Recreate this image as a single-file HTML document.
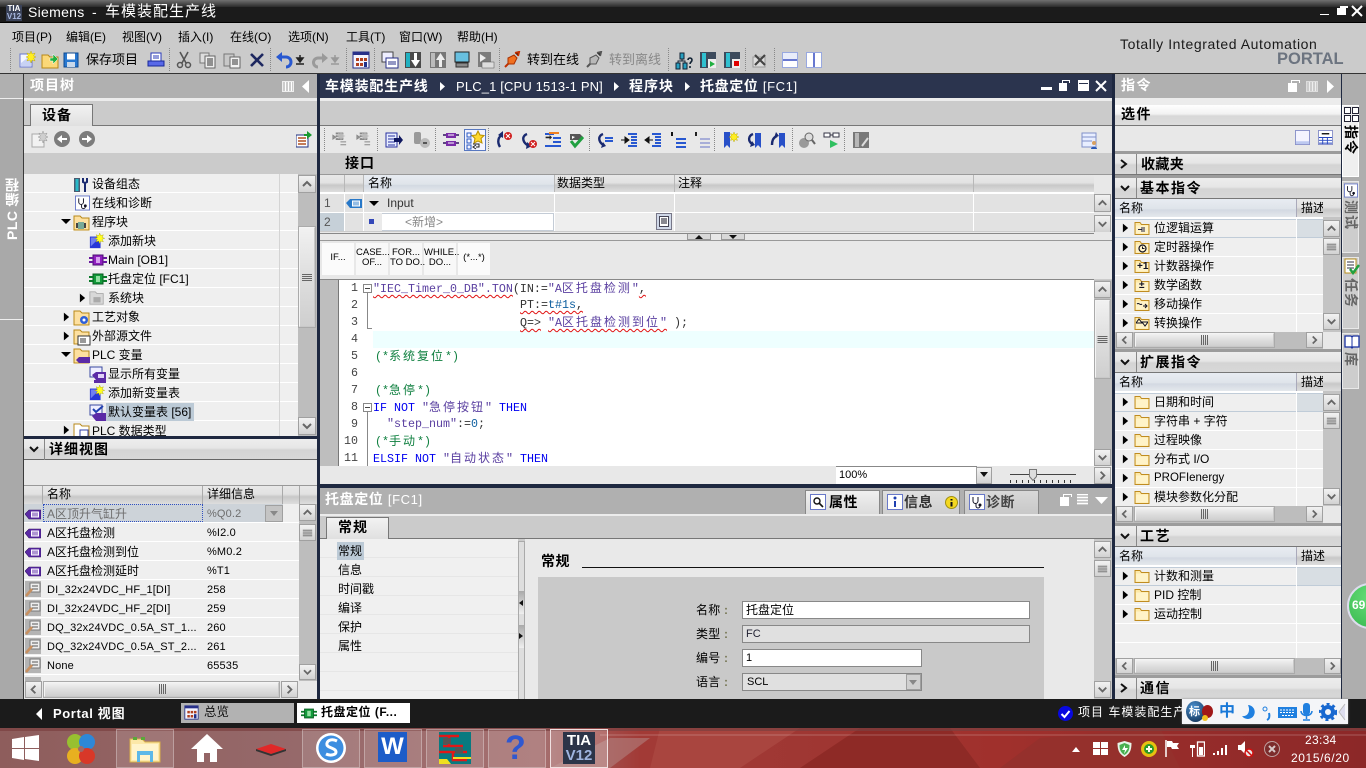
<!DOCTYPE html>
<html lang="zh-CN"><head><meta charset="utf-8"><title>Siemens - 车模装配生产线</title>
<style>
*{box-sizing:border-box}
html,body{margin:0;padding:0;width:1366px;height:768px;overflow:hidden;background:#cbcbcb}
body{position:relative;font:12px/14px "Liberation Sans","WenQuanYi Zen Hei","Noto Sans CJK SC",sans-serif;color:#000}
.a,.t,.i{position:absolute}
.t{white-space:nowrap}
.b{font-weight:bold;font-size:14px;line-height:18px;letter-spacing:1px}
.w{color:#fff}
.sb{background:linear-gradient(#f2f2f2,#d2d2d2);border:1px solid #fff;outline:1px solid #a0a0a0;outline-offset:-1px}
.th{background:linear-gradient(#f1f1f1,#dedede 50%,#cfcfcf);border:2px solid #fff;border-color:#f4f4f4 #c8c8c8 #c8c8c8 #f4f4f4;outline:1px solid #aaa;outline-offset:-1px}
.band{background:linear-gradient(#ededed,#e6e6e6 45%,#d4d4d4 55%,#d8d8d8);border-bottom:1px solid #777}
.hd{background:linear-gradient(#e8ecf2,#dfe4ea 55%,#d3d9e2 60%,#e4e8ec)}
.hg{background:linear-gradient(#e8e8e8,#e2e2e2 45%,#c8c8c8 60%,#dedede)}
.rows{background:repeating-linear-gradient(#efefef 0,#efefef 18px,#fff 18px,#fff 19px)}
.sep{position:absolute;width:0;border-left:1px dotted #888}
.l{font-size:11px;letter-spacing:.15px}
pre{margin:0}
.c{position:absolute;font:11.67px/14px "Liberation Mono",monospace;white-space:pre;color:#333}
.c span{white-space:pre}
.z{font-family:"WenQuanYi Zen Hei","Noto Sans CJK SC",sans-serif;font-size:12px;letter-spacing:2px}
.k{color:#0000f0}.g{color:#108040}.s{color:#5a3fa0}
.u{text-decoration:underline wavy #e01010 1px;text-underline-offset:2px}
.n{position:absolute;width:20px;text-align:right;left:338px;font:11.67px/14px "Liberation Mono",monospace;color:#444}
</style></head><body>
<svg width="0" height="0" style="position:absolute"><defs>
<symbol id="fold" viewBox="0 0 16 16"><path d="M1 2.500h5l1.500 2H15v10H1z" fill="#fde9a8" stroke="#c08c20"/><path d="M2 5.500h12v8H2z" fill="#fff3c8"/></symbol>
<symbol id="cu" viewBox="0 0 16 16"><path d="M4 10l4-4 4 4" fill="none" stroke="#666" stroke-width="2"/></symbol>
<symbol id="cd" viewBox="0 0 16 16"><path d="M4 6l4 4 4-4" fill="none" stroke="#666" stroke-width="2"/></symbol>
<symbol id="cl" viewBox="0 0 16 16"><path d="M10 4l-4 4 4 4" fill="none" stroke="#666" stroke-width="2"/></symbol>
<symbol id="cr" viewBox="0 0 16 16"><path d="M6 4l4 4-4 4" fill="none" stroke="#666" stroke-width="2"/></symbol>
<symbol id="gh" viewBox="0 0 16 16"><path d="M3 5.500h10M3 7.500h10M3 9.500h10M3 11.500h10" stroke="#666"/></symbol>
<symbol id="gv" viewBox="0 0 16 16"><path d="M5.500 3v10M7.500 3v10M9.500 3v10M11.500 3v10" stroke="#666"/></symbol>
<symbol id="tr" viewBox="0 0 8 10"><path d="M1 0l6 5-6 5z" fill="#000"/></symbol>
<symbol id="td" viewBox="0 0 10 8"><path d="M0 1h10L5 6z" fill="#000"/></symbol>
<symbol id="tag" viewBox="0 0 16 12"><path d="M0 6l4-4h12v9H4z" fill="#5b2aa6" stroke="#301060" stroke-width=".6"/><rect x="6" y="3.500" width="8" height="6" fill="#fff"/><path d="M8 4.500v4M10 4.500v4M12 4.500v4" stroke="#5b2aa6"/></symbol>
<symbol id="ptag" viewBox="0 0 16 16"><rect width="16" height="16" fill="#b4b4b4"/><path d="M5 2h10v9H5z" fill="#eee" stroke="#777"/><path d="M7 5h6M7 8h6" stroke="#555"/><path d="M1 15l6-7" stroke="#c89060" stroke-width="2.500"/></symbol>
<symbol id="pb" viewBox="0 0 18 12"><rect x="4" y="1" width="10" height="10" fill="#9020c0" stroke="#4a1070"/><path d="M0 3h4v2H0zM0 7h4v2H0zM14 3h4v2h-4zM14 7h4v2h-4z" fill="#6a18a0"/><rect x="7" y="3" width="4" height="6" fill="#d8a0f0"/></symbol>
<symbol id="gb" viewBox="0 0 18 12"><rect x="4" y="1" width="10" height="10" fill="#129a3a" stroke="#0a5a20"/><path d="M0 3h4v2H0zM0 7h4v2H0zM14 3h4v2h-4zM14 7h4v2h-4z" fill="#0a7a2a"/><rect x="7" y="3" width="4" height="6" fill="#90e0a0"/></symbol>
<symbol id="doc" viewBox="0 0 18 18"><path d="M2 3h12v13H2z" fill="#f4f6ff" stroke="#6878d0"/><path d="M3 12l10-8v11H3z" fill="#c8d2f4"/><path d="M13 0l1.100 3 3-1-1.500 3 2.400 1-2.400 1 1.500 3-3-1-1.100 3-1.100-3-3 1 1.500-3-2.400-1 2.400-1-1.500-3 3 1z" fill="#ffee20" stroke="#b8a000" stroke-width=".4"/></symbol>
<symbol id="docg" viewBox="0 0 18 18"><path d="M2 3h12v13H2z" fill="#f2f2f2" stroke="#aaa"/><path d="M13 0l1.100 3 3-1-1.500 3 2.400 1-2.400 1 1.500 3-3-1-1.100 3-1.100-3-3 1 1.500-3-2.400-1 2.400-1-1.500-3 3 1z" fill="#cfcfcf" stroke="#888" stroke-width=".4"/></symbol>
<symbol id="open" viewBox="0 0 18 18"><path d="M1 4h6l2 2h8v11H1z" fill="#fbd878" stroke="#b88818"/><path d="M9 7h3V3l5 5-5 5v-3H9z" fill="#20b040" stroke="#fff" stroke-width=".5"/></symbol>
<symbol id="save" viewBox="0 0 16 16"><path d="M1 1h14v14H1z" fill="#2878d0" stroke="#0c4890"/><rect x="4" y="1.500" width="8" height="6" fill="#fff"/><rect x="4" y="10" width="8" height="5" fill="#c8d8ea"/></symbol>
<symbol id="print" viewBox="0 0 18 18"><path d="M4 2h10v8H4z" fill="#fff" stroke="#2838b8"/><path d="M6 5h6M6 7h6" stroke="#2838b8"/><path d="M1 10h16v5H1z" fill="#5868e8" stroke="#182898"/></symbol>
<symbol id="cut" viewBox="0 0 18 18"><path d="M5 1l6 11M13 1L7 12" stroke="#555" stroke-width="1.600"/><circle cx="5" cy="14" r="2.500" fill="none" stroke="#555" stroke-width="1.500"/><circle cx="13" cy="14" r="2.500" fill="none" stroke="#555" stroke-width="1.500"/></symbol>
<symbol id="copy" viewBox="0 0 18 18"><path d="M1 2h9v10H1z" fill="#ddd" stroke="#777"/><path d="M6 5h10v12H6z" fill="#eee" stroke="#666"/><path d="M8 8h6M8 10h6M8 12h6M8 14h6" stroke="#333"/></symbol>
<symbol id="paste" viewBox="0 0 18 18"><path d="M1 3h10v12H1z" fill="#c8c8c8" stroke="#777"/><path d="M7 6h10v11H7z" fill="#f2f2f2" stroke="#666"/><path d="M9 9h6M9 11h6M9 13h6" stroke="#333"/></symbol>
<symbol id="x" viewBox="0 0 18 18"><path d="M3 3l12 12M15 3L3 15" stroke="#1e2860" stroke-width="2.600"/></symbol>
<symbol id="undo" viewBox="0 0 18 18"><path d="M3 6h8a4.500 4.500 0 010 10" fill="none" stroke="#2858d0" stroke-width="3"/><path d="M7 1L1 6l6 5z" fill="#2858d0"/></symbol>
<symbol id="redo" viewBox="0 0 18 18"><path d="M15 7H7a4.500 4.500 0 000 9" fill="none" stroke="#9a9a9a" stroke-width="3"/><path d="M11 2l6 5-6 5z" fill="#9a9a9a"/></symbol>
<symbol id="dl" viewBox="0 0 10 12"><path d="M5 1v5M2 4l3 4 3-4zM1 10h8" stroke="#222" fill="#222" stroke-width="1.500"/></symbol>
<symbol id="dlg" viewBox="0 0 10 12"><path d="M5 1v5M2 4l3 4 3-4zM1 10h8" stroke="#999" fill="#999" stroke-width="1.500"/></symbol>
<symbol id="grid" viewBox="0 0 18 18"><rect x="1" y="1" width="16" height="16" fill="#f4f4ff" stroke="#28308a"/><rect x="1" y="1" width="16" height="3" fill="#28308a"/><path d="M4 7h3v3H4zM8 7h3v3H8zM12 7h3v3h-3zM4 12h3v3H4zM8 12h3v3H8z" fill="#b04020"/><path d="M12 11h3v5h-3z" fill="#20308a"/></symbol>
<symbol id="mon" viewBox="0 0 18 18"><rect x="2" y="1" width="14" height="10" fill="#68c0e0" stroke="#222"/><rect x="3" y="12" width="12" height="4" fill="#8a8a8a" stroke="#333"/></symbol>
<symbol id="cc" viewBox="0 0 18 18"><path d="M1 1h11v10H1z" fill="#eef" stroke="#444"/><path d="M5 7h12v10H5z" fill="#fff" stroke="#28308a"/><path d="M8 10v4M10 10v4M12 10v4M14 10v4" stroke="#28308a"/></symbol>
<symbol id="dn" viewBox="0 0 18 18"><rect x="1" y="1" width="16" height="16" fill="#4a4a4a"/><rect x="2" y="2" width="4" height="14" fill="#20b0c0"/><path d="M10 2h3v7h3l-4.500 7L7 9h3z" fill="#fff"/></symbol>
<symbol id="upg" viewBox="0 0 18 18"><rect x="1" y="1" width="16" height="16" fill="#777"/><rect x="2" y="2" width="4" height="14" fill="#bbb"/><path d="M10 16h3V9h3L11.500 2 7 9h3z" fill="#eee"/></symbol>
<symbol id="rt" viewBox="0 0 18 18"><rect x="1" y="1" width="13" height="15" fill="#7c7c7c"/><path d="M3 3l6 4-6 4z" fill="#eee"/><rect x="5" y="11" width="12" height="6" fill="#ddd" stroke="#555" stroke-width=".5"/></symbol>
<symbol id="plug" viewBox="0 0 18 18"><path d="M2 16l4-4M12 2l4-1-1 4" stroke="#c03000" stroke-width="2"/><path d="M5 7l6-3 3 3-3 6-6 0z" fill="#f07020" stroke="#a83000"/></symbol>
<symbol id="plugg" viewBox="0 0 18 18"><path d="M2 16l4-4M12 2l4-1-1 4" stroke="#555" stroke-width="2"/><path d="M5 7l6-3 3 3-3 6-6 0z" fill="#b8b8b8" stroke="#555"/></symbol>
<symbol id="net" viewBox="0 0 18 18"><rect x="5" y="1" width="4" height="6" fill="#28a0c0" stroke="#123"/><rect x="1" y="11" width="4" height="6" fill="#28a0c0" stroke="#123"/><rect x="8" y="11" width="4" height="6" fill="#28a0c0" stroke="#123"/><path d="M7 7v2H3v2M7 9h3v2" fill="none" stroke="#123"/><path d="M13 8a2 2 0 114 0c0 2-2 2-2 4M15 14v2" fill="none" stroke="#123" stroke-width="1.600"/></symbol>
<symbol id="run" viewBox="0 0 18 18"><rect x="1" y="1" width="16" height="16" fill="#3c4a5c"/><rect x="3" y="2" width="4" height="14" fill="#30c0d0"/><rect x="9" y="8" width="8" height="9" fill="#eee"/><path d="M11 10l5 3-5 3z" fill="#20b040"/></symbol>
<symbol id="stp" viewBox="0 0 18 18"><rect x="1" y="1" width="16" height="16" fill="#3c4a5c"/><rect x="3" y="2" width="4" height="14" fill="#30c0d0"/><rect x="9" y="8" width="8" height="9" fill="#eee"/><rect x="11" y="10" width="5" height="5" fill="#e00000"/></symbol>
<symbol id="xw" viewBox="0 0 18 18"><path d="M2 6h12v10H2z" fill="#ddd" stroke="#999"/><path d="M4 4l10 10M14 4L4 14" stroke="#444" stroke-width="2.200"/></symbol>
<symbol id="h2" viewBox="0 0 16 16"><rect x=".5" y=".5" width="15" height="15" fill="#fff" stroke="#98a8e0"/><rect x="1" y="1" width="14" height="6" fill="#e8ecfa"/><path d="M1 8h14" stroke="#6878d0" stroke-width="2"/></symbol>
<symbol id="v2" viewBox="0 0 16 16"><rect x=".5" y=".5" width="15" height="15" fill="#fff" stroke="#98a8e0"/><path d="M8 1v14" stroke="#6878d0" stroke-width="2"/></symbol>
<symbol id="lst" viewBox="0 0 18 18"><path d="M5 2h8M5 5h8M5 8h8" stroke="#888" stroke-width="2"/><path d="M2 4l3 2-3 2zM10 11h6M10 14h6" stroke="#888" fill="#999"/><path d="M12 0l1 3 3-1-1 3 3 1-3 1 1 3-3-1-1 3-1-3-3 1 1-3-3-1 3-1-1-3 3 1z" fill="#bbb" transform="translate(1 0) scale(.8)"/></symbol>
<symbol id="dest" viewBox="0 0 18 18"><path d="M1 2h11v14H1z" fill="#e8eeff" stroke="#2830a0"/><path d="M3 5h7M3 8h7M3 11h7M3 14h7" stroke="#2830a0"/><path d="M9 7h5V4l4 5-4 5v-3H9z" fill="#101860"/></symbol>
<symbol id="cyl" viewBox="0 0 18 18"><rect x="1" y="1" width="7" height="12" rx="2" fill="#9a9a9a"/><circle cx="12" cy="12" r="5" fill="#bbb"/><path d="M10 12h4" stroke="#555" stroke-width="2"/></symbol>
<symbol id="ch" viewBox="0 0 18 18"><rect x="4" y="2" width="10" height="5" fill="#7a2ca8"/><rect x="4" y="10" width="10" height="5" fill="#7a2ca8"/><path d="M1 4h3M14 4h3M1 12h3M14 12h3" stroke="#301060" stroke-width="1.500"/><path d="M6 4h6M6 12h6" stroke="#fff"/></symbol>
<symbol id="star" viewBox="0 0 20 20"><path d="M2 3h4v4H2zM2 9h4v4H2zM2 15h4v4H2z" fill="none" stroke="#2858c0"/><path d="M13 1l2 4 4 .500-3 3 1 4.500-4-2-4 2 1-4.500-3-3 4-.500z" fill="#ffd830" stroke="#b89000"/><path d="M8 14h6v3h-3M11 19l-3-2 3-2" fill="none" stroke="#222"/></symbol>
<symbol id="rx" viewBox="0 0 18 18"><path d="M8 4C3 5 2 11 5 16" fill="none" stroke="#1a2a70" stroke-width="2.400"/><path d="M8 0L3 4l5 3z" fill="#1a2a70"/><circle cx="13" cy="5" r="4" fill="#d02020"/><path d="M11 3l4 4M15 3l-4 4" stroke="#fff"/></symbol>
<symbol id="lx" viewBox="0 0 18 18"><path d="M7 3C2 5 2 10 7 14" fill="none" stroke="#1a2a70" stroke-width="2.400"/><path d="M6 18l6-3-5-4z" fill="#1a2a70"/><circle cx="13" cy="13" r="4" fill="#d02020"/><path d="M11 11l4 4M15 11l-4 4" stroke="#fff"/></symbol>
<symbol id="ind" viewBox="0 0 18 18"><path d="M1 3h9M9 7h8M9 11h8M1 15h16" stroke="#2858d0" stroke-width="2"/><path d="M5 1h10v2H5z" fill="#f08020"/><path d="M2 7h5v-2l3 3-3 3V9H2z" fill="#222" transform="scale(.8)"/></symbol>
<symbol id="chk" viewBox="0 0 18 18"><path d="M2 3h10l3 3-3 3H2z" fill="#555"/><path d="M4 5l3 1-3 2z" fill="#fff"/><path d="M3 10l4 5 8-9" fill="none" stroke="#20a040" stroke-width="3"/></symbol>
<symbol id="lar" viewBox="0 0 18 18"><path d="M7 3C2 5 2 10 7 14" fill="none" stroke="#1a2a70" stroke-width="2.400"/><path d="M5 17l5-2-3-4z" fill="#1a2a70"/><path d="M9 7h8M9 10h8" stroke="#2858d0" stroke-width="2"/></symbol>
<symbol id="ina" viewBox="0 0 18 18"><path d="M8 3h9M11 6h6M11 9h6M11 12h6M8 15h9" stroke="#2858d0" stroke-width="2"/><path d="M1 9h6M5 6l4 3-4 3z" stroke="#111" fill="#111"/></symbol>
<symbol id="ola" viewBox="0 0 18 18"><path d="M8 3h9M11 6h6M11 9h6M11 12h6M8 15h9" stroke="#2858d0" stroke-width="2"/><path d="M9 9H3M5 6L1 9l4 3z" stroke="#111" fill="#111"/></symbol>
<symbol id="cmt" viewBox="0 0 18 18"><path d="M2 1h2v4H2z" fill="#111"/><path d="M7 8h10M7 12h10M7 16h10" stroke="#2858d0" stroke-width="2"/></symbol>
<symbol id="cmg" viewBox="0 0 18 18"><path d="M2 1h2v4H2z" fill="#222"/><path d="M7 8h10M7 12h10M7 16h10" stroke="#a8aed8" stroke-width="2"/></symbol>
<symbol id="bm" viewBox="0 0 18 18"><path d="M2 1h6v16l-3-3-3 3z" fill="#2850c8"/><path d="M12 1l1 2.500 2.500-1-1 2.500 2.500 1-2.500 1 1 2.500-2.500-1-1 2.500-1-2.500-2.500 1 1-2.500-2.500-1 2.500-1-1-2.500 2.500 1z" fill="#ffee20" stroke="#b0a000" stroke-width=".4"/></symbol>
<symbol id="bl" viewBox="0 0 18 18"><path d="M10 2h6v15l-3-3-3 3z" fill="#2850c8"/><path d="M8 3C3 5 3 10 7 13" fill="none" stroke="#1a2a70" stroke-width="2.400"/><path d="M5 16l5-2-3-4z" fill="#1a2a70"/></symbol>
<symbol id="br" viewBox="0 0 18 18"><path d="M10 2h6v15l-3-3-3 3z" fill="#2850c8"/><path d="M3 14c0-5 2-8 5-9" fill="none" stroke="#1a2a70" stroke-width="2.400"/><path d="M7 1l3 4-5 2z" fill="#1a2a70"/></symbol>
<symbol id="srch" viewBox="0 0 18 18"><circle cx="6" cy="12" r="5" fill="#999"/><circle cx="11" cy="6" r="4" fill="#ddd" stroke="#666"/><path d="M14 9l3 4" stroke="#666" stroke-width="2"/></symbol>
<symbol id="gl" viewBox="0 0 18 18"><rect x="1" y="2" width="6" height="4" fill="#fff" stroke="#334"/><rect x="10" y="2" width="6" height="4" fill="#fff" stroke="#334"/><path d="M7 4h3" stroke="#334"/><path d="M7 9l8 4-8 4z" fill="#30c060"/></symbol>
<symbol id="bz" viewBox="0 0 18 18"><rect x="1" y="1" width="16" height="16" fill="#787878"/><rect x="3" y="2" width="4" height="14" fill="#b8b8b8"/><path d="M10 15l6-8" stroke="#ddd" stroke-width="2"/></symbol>
<symbol id="usr" viewBox="0 0 18 18"><rect x="1" y="1" width="14" height="14" fill="#e8eeff" stroke="#8090c8"/><path d="M1 5h14M1 9h10" stroke="#8090c8"/><circle cx="13" cy="11" r="2" fill="#d8a060"/><path d="M10 17c0-3 6-3 6 0z" fill="#2858b8"/></symbol>
<symbol id="t1" viewBox="0 0 16 16"><rect x=".5" y=".5" width="15" height="15" fill="#f4f4ff" stroke="#8890c8"/><rect x="1" y="12" width="14" height="3" fill="#bcc8f0"/></symbol>
<symbol id="t2" viewBox="0 0 16 16"><rect x=".5" y=".5" width="15" height="15" fill="#fff" stroke="#8890c8"/><path d="M1 8h14M1 11h14M1 14h14M5 8v7M10 8v7" stroke="#2848c0"/><path d="M4 4h8" stroke="#111" stroke-width="1.500"/></symbol>
<symbol id="steth" viewBox="0 0 16 16"><rect x=".5" y=".5" width="15" height="15" fill="#fff" stroke="#6878c8"/><path d="M4 3v4a2.500 2.500 0 005 0V3M7 10v2a2 2 0 004 0" fill="none" stroke="#112"/><circle cx="11" cy="11" r="1.500" fill="#112"/></symbol>
<symbol id="tool" viewBox="0 0 18 18"><rect x="1" y="2" width="6" height="14" fill="#4a5a70"/><rect x="2.500" y="3" width="3" height="12" fill="#28b8c8"/><path d="M10 2v4l2 1 2-1V2M12 7v9" fill="none" stroke="#1a2a70" stroke-width="2"/></symbol>
<symbol id="pfold" viewBox="0 0 18 18"><path d="M1 2h6l2 2h7v12H1z" fill="#fde0a0" stroke="#b88818"/><rect x="3" y="9" width="10" height="5" fill="#444"/><rect x="5" y="8" width="6" height="7" fill="#78aa98"/></symbol>
<symbol id="gfold" viewBox="0 0 18 18"><path d="M1 2h6l2 2h7v12H1z" fill="#d8d8d8" stroke="#aaa"/><rect x="5" y="8" width="8" height="6" fill="#aaa"/></symbol>
<symbol id="tfold" viewBox="0 0 18 18"><path d="M1 2h6l2 2h7v12H1z" fill="#fde0a0" stroke="#b88818"/><circle cx="11" cy="11" r="4" fill="#3060d8"/><circle cx="11" cy="11" r="1.500" fill="#fff"/></symbol>
<symbol id="xfold" viewBox="0 0 18 18"><path d="M1 2h6l2 2h7v12H1z" fill="#fde0a0" stroke="#b88818"/><rect x="5" y="8" width="12" height="9" fill="#fff" stroke="#333"/><path d="M8 10v5M10 10v5M12 10v5" stroke="#333"/></symbol>
<symbol id="vfold" viewBox="0 0 18 18"><path d="M1 2h6l2 2h7v12H1z" fill="#fde0a0" stroke="#b88818"/><path d="M3 13l3-3h11v6H6z" fill="#5b2aa6"/></symbol>
<symbol id="dfold" viewBox="0 0 18 18"><path d="M1 2h6l2 2h7v12H1z" fill="#fff" stroke="#b88818"/><rect x="7" y="8" width="8" height="8" fill="#fff" stroke="#3040a8"/></symbol>
<symbol id="vall" viewBox="0 0 18 18"><rect x="1" y="1" width="12" height="10" fill="#eef" stroke="#3848a0"/><path d="M3 9l4-3h10v8H7z" fill="#5b2aa6"/><rect x="9" y="8" width="6" height="4" fill="#e0d0f8"/><rect x="5" y="14" width="12" height="3" fill="#5b2aa6"/></symbol>
<symbol id="vdef" viewBox="0 0 18 18"><rect x="1" y="1" width="12" height="10" fill="#eef" stroke="#3848a0"/><path d="M4 5l3 3 7-6" fill="none" stroke="#2040b0" stroke-width="2"/><path d="M3 12l4-3h10v8H7z" fill="#5b2aa6"/></symbol>
<symbol id="nw" viewBox="0 0 18 18"><rect x="1" y="4" width="12" height="13" fill="#2838d8"/><path d="M2 5h10L2 15z" fill="#7080f0"/><path d="M12 0l1.200 3 3-1-1.500 3 3 1-3 1 1.500 3-3-1-1.200 3-1-3-3 1 1.500-3-3-1 3-1-1.500-3 3 1z" fill="#ffff20" stroke="#a09800" stroke-width=".4"/></symbol>
</defs></svg>

<!-- title bar -->
<div class="a" style="left:0;top:0;width:1366px;height:7px;background:linear-gradient(#707070,#2a2a2a)"></div>
<div class="a" style="left:0;top:7px;width:1366px;height:16px;background:#1b1b1b"></div>
<div class="a" style="left:0;top:22px;width:1366px;height:1px;background:#000"></div>
<div class="a" style="left:6px;top:5px;width:16px;height:16px;background:#3a4258"></div>
<div class="t w" style="left:6px;top:5px;font-size:8px;line-height:8px;width:16px;text-align:center;font-weight:bold">TIA<br><span style="color:#a8b8e0">V12</span></div>
<div class="t w" style="left:28px;top:4px;font-size:14px;line-height:17px;letter-spacing:.3px">Siemens</div>
<div class="t w" style="left:92px;top:4px;font-size:14px;line-height:17px">-</div>
<div class="t w" style="left:105px;top:3px;font-size:15px;line-height:18px;letter-spacing:1px">车模装配生产线</div>
<div class="a" style="left:1320px;top:14px;width:9px;height:1px;background:#fff"></div>
<div class="a" style="left:1337px;top:8px;width:9px;height:7px;background:#fff"></div>
<div class="a" style="left:1340px;top:6px;width:8px;height:2px;background:#fff"></div>
<svg class="i" style="left:1351px;top:5px" width="12" height="12"><path d="M1 1l10 10M11 1L1 11" stroke="#fff" stroke-width="2"/></svg>

<!-- menu -->
<div class="a" style="left:0;top:23px;width:1366px;height:50px;background:#cbcbcb"></div>
<div class="a" style="left:0;top:73px;width:1366px;height:1px;background:#333"></div>
<div class="t" style="left:12px;top:30px">项目(P)</div>
<div class="t" style="left:66px;top:30px">编辑(E)</div>
<div class="t" style="left:122px;top:30px">视图(V)</div>
<div class="t" style="left:178px;top:30px">插入(I)</div>
<div class="t" style="left:230px;top:30px">在线(O)</div>
<div class="t" style="left:288px;top:30px">选项(N)</div>
<div class="t" style="left:346px;top:30px">工具(T)</div>
<div class="t" style="left:399px;top:30px">窗口(W)</div>
<div class="t" style="left:457px;top:30px">帮助(H)</div>
<div class="t" style="left:1120px;top:37px;font-size:14px;line-height:15px;letter-spacing:.58px;color:#1a1a1a">Totally Integrated Automation</div>
<div class="t" style="left:1277px;top:49px;font-size:16.500px;line-height:20px;font-weight:bold;color:#6c7480">PORTAL</div>

<!-- main toolbar -->
<div class="sep" style="left:10px;top:48px;height:23px"></div><div class="sep" style="left:169px;top:48px;height:23px"></div><div class="sep" style="left:270px;top:48px;height:23px"></div><div class="sep" style="left:346px;top:48px;height:23px"></div><div class="sep" style="left:374px;top:48px;height:23px"></div><div class="sep" style="left:499px;top:48px;height:23px"></div><div class="sep" style="left:668px;top:48px;height:23px"></div><div class="sep" style="left:745px;top:48px;height:23px"></div><div class="sep" style="left:774px;top:48px;height:23px"></div>
<svg class="i" style="left:18px;top:51px" width="18" height="18"><use href="#doc"/></svg>
<svg class="i" style="left:41px;top:51px" width="18" height="18"><use href="#open"/></svg>
<svg class="i" style="left:63px;top:52px" width="16" height="16"><use href="#save"/></svg>
<div class="t" style="left:86px;top:52px;font-size:13px;line-height:15px">保存项目</div>
<svg class="i" style="left:147px;top:51px" width="18" height="18"><use href="#print"/></svg>
<svg class="i" style="left:175px;top:51px" width="18" height="18"><use href="#cut"/></svg>
<svg class="i" style="left:199px;top:51px" width="18" height="18"><use href="#copy"/></svg>
<svg class="i" style="left:223px;top:51px" width="18" height="18"><use href="#paste"/></svg>
<svg class="i" style="left:248px;top:51px" width="18" height="18"><use href="#x"/></svg>
<svg class="i" style="left:275px;top:51px" width="18" height="18"><use href="#undo"/></svg>
<svg class="i" style="left:295px;top:54px" width="10" height="12"><use href="#dl"/></svg>
<svg class="i" style="left:311px;top:51px" width="18" height="18"><use href="#redo"/></svg>
<svg class="i" style="left:330px;top:54px" width="10" height="12"><use href="#dlg"/></svg>
<svg class="i" style="left:352px;top:51px" width="18" height="18"><use href="#grid"/></svg>
<svg class="i" style="left:381px;top:51px" width="18" height="18"><use href="#cc"/></svg>
<svg class="i" style="left:404px;top:51px" width="18" height="18"><use href="#dn"/></svg>
<svg class="i" style="left:429px;top:51px" width="18" height="18"><use href="#upg"/></svg>
<svg class="i" style="left:453px;top:51px" width="18" height="18"><use href="#mon"/></svg>
<svg class="i" style="left:477px;top:51px" width="18" height="18"><use href="#rt"/></svg>
<svg class="i" style="left:503px;top:51px" width="18" height="18"><use href="#plug"/></svg>
<div class="t" style="left:527px;top:52px;font-size:13px;line-height:15px">转到在线</div>
<svg class="i" style="left:585px;top:51px" width="18" height="18"><use href="#plugg"/></svg>
<div class="t" style="left:609px;top:52px;font-size:13px;line-height:15px;color:#888">转到离线</div>
<svg class="i" style="left:675px;top:52px" width="18" height="18"><use href="#net"/></svg>
<svg class="i" style="left:699px;top:51px" width="18" height="18"><use href="#run"/></svg>
<svg class="i" style="left:723px;top:51px" width="18" height="18"><use href="#stp"/></svg>
<svg class="i" style="left:751px;top:51px" width="18" height="18"><use href="#xw"/></svg>
<svg class="i" style="left:782px;top:52px" width="16" height="16"><use href="#h2"/></svg>
<svg class="i" style="left:806px;top:52px" width="16" height="16"><use href="#v2"/></svg>

<!-- left strip -->
<div class="a" style="left:0;top:74px;width:24px;height:626px;background:#a9a9a9"></div>
<div class="a" style="left:0;top:74px;width:24px;height:24px;background:#b0b0b0"></div>
<div class="a" style="left:0;top:98px;width:23px;height:1px;background:#eee"></div>
<div class="a" style="left:0;top:319px;width:23px;height:1px;background:#eee"></div>
<div class="a" style="left:23px;top:74px;width:1px;height:626px;background:#3a3a3a"></div>
<div class="t w" style="left:3px;top:180px;font-size:14px;line-height:18px;font-weight:bold;writing-mode:vertical-rl;transform:rotate(180deg);height:60px;letter-spacing:.5px">PLC 编程</div>

<!-- project tree -->
<div class="a" style="left:24px;top:74px;width:293px;height:24px;background:#b0b0b0"></div>
<div class="t b w" style="left:30px;top:76px">项目树</div>
<svg class="i" style="left:282px;top:81px" width="12" height="11"><rect x=".5" y=".5" width="11" height="10" fill="#ccc" stroke="#eee"/><path d="M3.500 1v9M6.500 1v9M9.500 1v9" stroke="#fff"/></svg>
<svg class="i" style="left:302px;top:80px" width="8" height="13"><path d="M7 0L0 6.500 7 13z" fill="#fff"/></svg>
<div class="a" style="left:24px;top:98px;width:293px;height:3px;background:#ececec"></div>
<div class="a" style="left:24px;top:101px;width:293px;height:24px;background:#cbcbcb"></div>
<div class="a" style="left:24px;top:125px;width:293px;height:1px;background:#777"></div>
<div class="a" style="left:30px;top:104px;width:63px;height:22px;background:linear-gradient(#f2f2f2,#e0e0e0);border:1px solid #777;border-bottom:0"></div>
<div class="t b" style="left:42px;top:106px">设备</div>
<div class="a" style="left:24px;top:126px;width:293px;height:27px;background:#e8e8e8"></div>
<svg class="i" style="left:30px;top:131px" width="18" height="18"><use href="#docg"/></svg>
<svg class="i" style="left:54px;top:131px" width="16" height="16"><circle cx="8" cy="8" r="8" fill="#7c7c7c"/><path d="M3 8l5-4v3h5v2H8v3z" fill="#fff"/></svg>
<svg class="i" style="left:79px;top:131px" width="16" height="16"><circle cx="8" cy="8" r="8" fill="#7c7c7c"/><path d="M13 8L8 4v3H3v2h5v3z" fill="#fff"/></svg>
<svg class="i" style="left:296px;top:131px" width="16" height="17"><rect x="0" y="4" width="12" height="12" fill="#fff" stroke="#203080"/><path d="M2 7h8M2 10h8M2 13h8" stroke="#b05020" stroke-width="1.500"/><path d="M8 3h3V0l5 4-5 4V5H8z" fill="#1a9a30"/></svg>
<div class="a" style="left:24px;top:153px;width:293px;height:21px;background:#cbcbcb"></div>
<div class="a rows" style="left:24px;top:174px;width:275px;height:262px;overflow:hidden"></div>
<div class="a" style="left:279px;top:174px;width:1px;height:262px;background:#d4d4d4"></div>
<svg class="i" style="left:73px;top:176px" width="18" height="18"><use href="#tool"/></svg>
<div class="t" style="left:92px;top:177px">设备组态</div>
<svg class="i" style="left:75px;top:195px" width="15" height="16"><use href="#steth"/></svg>
<div class="t" style="left:92px;top:196px">在线和诊断</div>
<svg class="i" style="left:61px;top:218px" width="10" height="8"><use href="#td"/></svg>
<svg class="i" style="left:73px;top:214px" width="18" height="18"><use href="#pfold"/></svg>
<div class="t" style="left:92px;top:215px">程序块</div>
<svg class="i" style="left:89px;top:233px" width="16" height="16"><use href="#nw"/></svg>
<div class="t" style="left:108px;top:234px">添加新块</div>
<svg class="i" style="left:89px;top:254px" width="18" height="12"><use href="#pb"/></svg>
<div class="t" style="left:108px;top:253px">Main [OB1]</div>
<svg class="i" style="left:89px;top:273px" width="18" height="12"><use href="#gb"/></svg>
<div class="t" style="left:108px;top:272px">托盘定位 [FC1]</div>
<svg class="i" style="left:79px;top:293px" width="7" height="10"><use href="#tr"/></svg>
<svg class="i" style="left:89px;top:290px" width="16" height="16"><use href="#gfold"/></svg>
<div class="t" style="left:108px;top:291px">系统块</div>
<svg class="i" style="left:63px;top:312px" width="7" height="10"><use href="#tr"/></svg>
<svg class="i" style="left:73px;top:309px" width="18" height="18"><use href="#tfold"/></svg>
<div class="t" style="left:92px;top:310px">工艺对象</div>
<svg class="i" style="left:63px;top:331px" width="7" height="10"><use href="#tr"/></svg>
<svg class="i" style="left:73px;top:328px" width="18" height="18"><use href="#xfold"/></svg>
<div class="t" style="left:92px;top:329px">外部源文件</div>
<svg class="i" style="left:61px;top:351px" width="10" height="8"><use href="#td"/></svg>
<svg class="i" style="left:73px;top:347px" width="18" height="18"><use href="#vfold"/></svg>
<div class="t" style="left:92px;top:348px">PLC 变量</div>
<svg class="i" style="left:89px;top:366px" width="18" height="18"><use href="#vall"/></svg>
<div class="t" style="left:108px;top:367px">显示所有变量</div>
<svg class="i" style="left:89px;top:385px" width="16" height="16"><use href="#nw"/></svg>
<div class="t" style="left:108px;top:386px">添加新变量表</div>
<div class="a" style="left:106px;top:403px;width:88px;height:18px;background:#bccad6"></div>
<svg class="i" style="left:89px;top:404px" width="18" height="18"><use href="#vdef"/></svg>
<div class="t" style="left:108px;top:405px">默认变量表 [56]</div>
<div class="a" style="left:24px;top:422px;width:275px;height:14px;overflow:hidden">
<div class="t" style="left:68px;top:2px">PLC 数据类型</div>
<svg class="i" style="left:49px;top:0" width="18" height="18"><use href="#dfold"/></svg>
<svg class="i" style="left:39px;top:3px" width="7" height="10"><use href="#tr"/></svg></div>
<div class="a" style="left:298px;top:174px;width:19px;height:262px;background:#bdbdbd"></div>
<svg class="i sb" style="left:298px;top:175px" width="18" height="18"><use href="#cu"/></svg>
<div class="a th" style="left:298px;top:226px;width:18px;height:102px"></div>
<svg class="i" style="left:298px;top:269px" width="18" height="16"><use href="#gh"/></svg>
<svg class="i sb" style="left:298px;top:417px" width="18" height="18"><use href="#cd"/></svg>

<!-- dividers -->
<div class="a" style="left:317px;top:74px;width:3px;height:626px;background:#1e2840"></div>
<div class="a" style="left:24px;top:436px;width:293px;height:3px;background:#1e2840"></div>
<div class="a" style="left:1112px;top:74px;width:3px;height:626px;background:#1e2840"></div>
<div class="a" style="left:1341px;top:74px;width:1px;height:626px;background:#1e2840"></div>

<!-- detail view -->
<div class="a band" style="left:24px;top:439px;width:293px;height:21px;border-bottom:1px solid #666"></div>
<svg class="i" style="left:28px;top:443px" width="12" height="12"><path d="M2 4l4 4 4-4" fill="none" stroke="#111" stroke-width="2"/></svg>
<div class="a" style="left:44px;top:439px;width:1px;height:21px;background:#888"></div>
<div class="t b" style="left:49px;top:440px">详细视图</div>
<div class="a" style="left:24px;top:460px;width:293px;height:25px;background:#e8e8e8"></div>
<div class="a" style="left:24px;top:485px;width:293px;height:1px;background:#999"></div>
<div class="a hg" style="left:24px;top:486px;width:293px;height:18px"></div>
<div class="a" style="left:42px;top:486px;width:1px;height:18px;background:#aaa"></div>
<div class="a" style="left:202px;top:486px;width:1px;height:18px;background:#aaa"></div>
<div class="a" style="left:282px;top:486px;width:1px;height:18px;background:#aaa"></div>
<div class="a" style="left:299px;top:486px;width:1px;height:18px;background:#aaa"></div>
<div class="t" style="left:47px;top:487px">名称</div><div class="t" style="left:207px;top:487px">详细信息</div>
<div class="a rows" style="left:24px;top:504px;width:275px;height:178px"></div>
<div class="a" style="left:24px;top:504px;width:259px;height:18px;background:#cdd3d9"></div>
<div class="a" style="left:43px;top:504px;width:160px;height:18px;border:1px dotted #3050c0"></div>
<svg class="i" style="left:25px;top:508px" width="16" height="12"><use href="#tag"/></svg>
<div class="t" style="left:47px;top:507px;color:#6e6e6e">A区顶升气缸升</div><div class="t l" style="left:207px;top:507px;color:#6e6e6e">%Q0.2</div>
<div class="a sb" style="left:265px;top:505px;width:18px;height:17px;background:#c4c4c4;border-color:#ddd"></div>
<svg class="i" style="left:268px;top:510px" width="12" height="8"><path d="M2 1h8L6 6z" fill="#888"/></svg>
<svg class="i" style="left:25px;top:527px" width="16" height="12"><use href="#tag"/></svg>
<div class="t" style="left:47px;top:526px">A区托盘检测</div><div class="t l" style="left:207px;top:526px">%I2.0</div>
<svg class="i" style="left:25px;top:546px" width="16" height="12"><use href="#tag"/></svg>
<div class="t" style="left:47px;top:545px">A区托盘检测到位</div><div class="t l" style="left:207px;top:545px">%M0.2</div>
<svg class="i" style="left:25px;top:565px" width="16" height="12"><use href="#tag"/></svg>
<div class="t" style="left:47px;top:564px">A区托盘检测延时</div><div class="t l" style="left:207px;top:564px">%T1</div>
<svg class="i" style="left:25px;top:581px" width="16" height="16"><use href="#ptag"/></svg>
<div class="t l" style="left:47px;top:583px">DI_32x24VDC_HF_1[DI]</div><div class="t l" style="left:207px;top:583px">258</div>
<svg class="i" style="left:25px;top:600px" width="16" height="16"><use href="#ptag"/></svg>
<div class="t l" style="left:47px;top:602px">DI_32x24VDC_HF_2[DI]</div><div class="t l" style="left:207px;top:602px">259</div>
<svg class="i" style="left:25px;top:619px" width="16" height="16"><use href="#ptag"/></svg>
<div class="t l" style="left:47px;top:621px">DQ_32x24VDC_0.5A_ST_1...</div><div class="t l" style="left:207px;top:621px">260</div>
<svg class="i" style="left:25px;top:638px" width="16" height="16"><use href="#ptag"/></svg>
<div class="t l" style="left:47px;top:640px">DQ_32x24VDC_0.5A_ST_2...</div><div class="t l" style="left:207px;top:640px">261</div>
<svg class="i" style="left:25px;top:657px" width="16" height="16"><use href="#ptag"/></svg>
<div class="t l" style="left:47px;top:659px">None</div><div class="t l" style="left:207px;top:659px">65535</div>
<div class="a" style="left:25px;top:677px;width:16px;height:4px;background:#b4b4b4"></div>
<div class="a" style="left:299px;top:504px;width:18px;height:177px;background:#bdbdbd"></div>
<svg class="i sb" style="left:299px;top:504px" width="17" height="17"><use href="#cu"/></svg>
<svg class="i sb" style="left:299px;top:524px" width="17" height="17"><use href="#gh"/></svg>
<svg class="i sb" style="left:299px;top:664px" width="17" height="16"><use href="#cd"/></svg>
<div class="a" style="left:24px;top:681px;width:293px;height:19px;background:#e8e8e8"></div>
<svg class="i sb" style="left:25px;top:681px" width="17" height="17"><use href="#cl"/></svg>
<div class="a th" style="left:43px;top:681px;width:237px;height:17px"></div>
<svg class="i" style="left:154px;top:681px" width="16" height="16"><use href="#gv"/></svg>
<svg class="i sb" style="left:281px;top:681px" width="17" height="17"><use href="#cr"/></svg>

<!-- editor -->
<div class="a" style="left:320px;top:74px;width:792px;height:24px;background:#2b344e"></div>
<div class="t b w" style="left:325px;top:77px;letter-spacing:.8px">车模装配生产线</div>
<svg class="i" style="left:440px;top:82px" width="6" height="9"><path d="M0 0l5 4.500L0 9z" fill="#fff"/></svg>
<div class="t w" style="left:456px;top:78px;font-size:13px;line-height:17px;letter-spacing:.15px">PLC_1 [CPU 1513-1 PN]</div>
<svg class="i" style="left:614px;top:82px" width="6" height="9"><path d="M0 0l5 4.500L0 9z" fill="#fff"/></svg>
<div class="t b w" style="left:629px;top:77px">程序块</div>
<svg class="i" style="left:685px;top:82px" width="6" height="9"><path d="M0 0l5 4.500L0 9z" fill="#fff"/></svg>
<div class="t b w" style="left:700px;top:77px;letter-spacing:.6px">托盘定位 <span style="font-weight:normal;font-size:13px">[FC1]</span></div>
<div class="a" style="left:1041px;top:87px;width:11px;height:3px;background:#fff"></div>
<div class="a" style="left:1059px;top:83px;width:8px;height:8px;background:#fff"></div><div class="a" style="left:1062px;top:80px;width:8px;height:3px;border:1px solid #fff;border-bottom:0"></div>
<div class="a" style="left:1078px;top:80px;width:11px;height:11px;background:#fff;border-top:3px solid #fff"></div><div class="a" style="left:1079px;top:83px;width:9px;height:1px;background:#2b344e"></div>
<svg class="i" style="left:1095px;top:80px" width="12" height="12"><path d="M1 1l10 10M11 1L1 11" stroke="#fff" stroke-width="2"/></svg>
<div class="a" style="left:320px;top:98px;width:792px;height:3px;background:#ececec"></div>
<div class="a" style="left:320px;top:101px;width:792px;height:24px;background:#cbcbcb"></div>
<div class="a" style="left:320px;top:125px;width:792px;height:1px;background:#777"></div>
<div class="a" style="left:320px;top:126px;width:792px;height:27px;background:#e8e8e8"></div>
<div class="sep" style="left:324px;top:128px;height:23px"></div><div class="sep" style="left:377px;top:128px;height:23px"></div><div class="sep" style="left:435px;top:128px;height:23px"></div><div class="sep" style="left:488px;top:128px;height:23px"></div><div class="sep" style="left:589px;top:128px;height:23px"></div><div class="sep" style="left:714px;top:128px;height:23px"></div><div class="sep" style="left:792px;top:128px;height:23px"></div><div class="sep" style="left:844px;top:128px;height:23px"></div>
<svg class="i" style="left:331px;top:131px" width="17" height="18"><use href="#lst"/></svg>
<svg class="i" style="left:355px;top:131px" width="17" height="18"><use href="#lst"/></svg>
<svg class="i" style="left:385px;top:131px" width="18" height="18"><use href="#dest"/></svg>
<svg class="i" style="left:413px;top:131px" width="18" height="18"><use href="#cyl"/></svg>
<svg class="i" style="left:442px;top:131px" width="18" height="18"><use href="#ch"/></svg>
<div class="a" style="left:464px;top:129px;width:22px;height:22px;border:1px solid #5878c0;background:#f4f4ff"></div>
<svg class="i" style="left:465px;top:130px" width="20" height="20"><use href="#star"/></svg>
<svg class="i" style="left:495px;top:131px" width="18" height="18"><use href="#rx"/></svg>
<svg class="i" style="left:520px;top:131px" width="18" height="18"><use href="#lx"/></svg>
<svg class="i" style="left:544px;top:131px" width="18" height="18"><use href="#ind"/></svg>
<svg class="i" style="left:568px;top:131px" width="18" height="18"><use href="#chk"/></svg>
<svg class="i" style="left:596px;top:131px" width="18" height="18"><use href="#lar"/></svg>
<svg class="i" style="left:620px;top:131px" width="18" height="18"><use href="#ina"/></svg>
<svg class="i" style="left:644px;top:131px" width="18" height="18"><use href="#ola"/></svg>
<svg class="i" style="left:669px;top:131px" width="18" height="18"><use href="#cmt"/></svg>
<svg class="i" style="left:693px;top:131px" width="18" height="18"><use href="#cmg"/></svg>
<svg class="i" style="left:722px;top:131px" width="18" height="18"><use href="#bm"/></svg>
<svg class="i" style="left:745px;top:131px" width="18" height="18"><use href="#bl"/></svg>
<svg class="i" style="left:769px;top:131px" width="18" height="18"><use href="#br"/></svg>
<svg class="i" style="left:798px;top:131px" width="18" height="18"><use href="#srch"/></svg>
<svg class="i" style="left:823px;top:131px" width="18" height="18"><use href="#gl"/></svg>
<svg class="i" style="left:852px;top:131px" width="18" height="18"><use href="#bz"/></svg>
<svg class="i" style="left:1081px;top:132px" width="18" height="18"><use href="#usr"/></svg>
<div class="a" style="left:320px;top:153px;width:792px;height:21px;background:#cbcbcb"></div>
<div class="t b" style="left:345px;top:154px">接口</div>
<div class="a" style="left:320px;top:174px;width:792px;height:1px;background:#999"></div>
<div class="a hg" style="left:320px;top:175px;width:44px;height:17px"></div>
<div class="a hd" style="left:364px;top:175px;width:190px;height:17px"></div>
<div class="a hg" style="left:555px;top:175px;width:539px;height:17px"></div>
<div class="a" style="left:344px;top:175px;width:1px;height:17px;background:#b8b8b8"></div>
<div class="a" style="left:363px;top:175px;width:1px;height:17px;background:#b8b8b8"></div>
<div class="a" style="left:554px;top:175px;width:1px;height:17px;background:#b8b8b8"></div>
<div class="a" style="left:674px;top:175px;width:1px;height:17px;background:#b8b8b8"></div>
<div class="a" style="left:973px;top:175px;width:1px;height:17px;background:#b8b8b8"></div>
<div class="t" style="left:368px;top:176px">名称</div><div class="t" style="left:557px;top:176px">数据类型</div><div class="t" style="left:678px;top:176px">注释</div>
<div class="a" style="left:320px;top:192px;width:774px;height:2px;background:#fff"></div>
<div class="a" style="left:320px;top:194px;width:774px;height:18px;background:#e2e2e2"></div>
<div class="a" style="left:320px;top:212px;width:774px;height:1px;background:#fff"></div>
<div class="a" style="left:320px;top:213px;width:774px;height:18px;background:#e2e2e2"></div>
<div class="a" style="left:320px;top:213px;width:24px;height:18px;background:#c6d0d8"></div>
<div class="a" style="left:344px;top:194px;width:1px;height:37px;background:#fff"></div><div class="a" style="left:363px;top:194px;width:1px;height:37px;background:#fff"></div><div class="a" style="left:554px;top:194px;width:1px;height:37px;background:#fff"></div><div class="a" style="left:674px;top:194px;width:1px;height:37px;background:#fff"></div><div class="a" style="left:973px;top:194px;width:1px;height:37px;background:#fff"></div>
<div class="t" style="left:324px;top:196px;color:#555">1</div><div class="t" style="left:324px;top:215px;color:#555">2</div>
<svg class="i" style="left:346px;top:197px" width="16" height="12"><path d="M0 6l4-4h12v9H4z" fill="#2878c8"/><rect x="6" y="3.500" width="8" height="6" fill="#fff"/><path d="M8 4.500v4M10 4.500v4M12 4.500v4" stroke="#2878c8"/></svg>
<svg class="i" style="left:369px;top:200px" width="10" height="8"><use href="#td"/></svg>
<div class="t" style="left:387px;top:196px;color:#333;font-size:12px">Input</div>
<div class="a" style="left:364px;top:213px;width:190px;height:18px;background:#fff;border:1px solid #c4ccd6"></div>
<div class="a" style="left:364px;top:213px;width:18px;height:18px;background:#eaeaea"></div>
<div class="a" style="left:369px;top:219px;width:5px;height:5px;background:#3448b8"></div>
<div class="t" style="left:405px;top:215px;color:#888">&lt;新增&gt;</div>
<div class="a" style="left:555px;top:213px;width:119px;height:18px;background:#eee"></div>
<div class="a" style="left:656px;top:213px;width:16px;height:17px;background:#d0d8e8;border:1px solid #778"></div>
<svg class="i" style="left:659px;top:216px" width="10" height="11"><rect x=".5" y=".5" width="9" height="10" fill="#fff" stroke="#445"/><path d="M2 3h6M2 5h6M2 7h6" stroke="#112"/></svg>
<div class="a" style="left:1094px;top:175px;width:18px;height:58px;background:#e8e8e8"></div>
<svg class="i sb" style="left:1094px;top:194px" width="17" height="18"><use href="#cu"/></svg>
<svg class="i sb" style="left:1094px;top:215px" width="17" height="18"><use href="#cd"/></svg>
<div class="a" style="left:320px;top:232px;width:792px;height:9px;background:#e8e8e8"></div>
<div class="a" style="left:320px;top:233px;width:774px;height:1px;background:#888"></div>
<div class="a" style="left:320px;top:240px;width:792px;height:1px;background:#999"></div>
<div class="a" style="left:687px;top:234px;width:24px;height:6px;background:#d8d8d8;border:1px solid #999;border-top:0"></div>
<svg class="i" style="left:695px;top:235px" width="8" height="4"><path d="M0 4l4-4 4 4z" fill="#111"/></svg>
<div class="a" style="left:721px;top:234px;width:24px;height:6px;background:#d8d8d8;border:1px solid #999;border-top:0"></div>
<svg class="i" style="left:729px;top:235px" width="8" height="4"><path d="M0 0l4 4 4-4z" fill="#111"/></svg>
<div class="a" style="left:320px;top:241px;width:792px;height:38px;background:#e8e8e8"></div>
<div class="a" style="left:322px;top:243px;width:32px;height:32px;background:#fbfbfb"></div><div class="a" style="left:356px;top:243px;width:32px;height:32px;background:#f8f8f8"></div><div class="a" style="left:390px;top:243px;width:32px;height:32px;background:#f8f8f8"></div><div class="a" style="left:424px;top:243px;width:32px;height:32px;background:#f8f8f8"></div><div class="a" style="left:458px;top:243px;width:32px;height:32px;background:#fbfbfb"></div>
<div class="t" style="left:322px;top:252px;width:32px;text-align:center;font-size:9.500px;line-height:12px">IF...</div>
<div class="t" style="left:356px;top:248px;width:32px;text-align:center;font-size:9.500px;line-height:10px">CASE...<br>OF...</div>
<div class="t" style="left:390px;top:248px;width:32px;text-align:center;font-size:9.500px;line-height:10px">FOR...<br>TO DO..</div>
<div class="t" style="left:424px;top:248px;width:32px;text-align:center;font-size:9.500px;line-height:10px">WHILE..<br>DO...</div>
<div class="t" style="left:458px;top:252px;width:32px;text-align:center;font-size:9.500px;line-height:12px">(*...*)</div>
<div class="a" style="left:320px;top:279px;width:774px;height:1px;background:#888"></div>
<div class="a" style="left:320px;top:280px;width:18px;height:186px;background:#bebebe"></div>
<div class="a" style="left:338px;top:280px;width:1px;height:186px;background:#777"></div>
<div class="a" style="left:339px;top:280px;width:755px;height:186px;background:#fff;overflow:hidden"></div>
<div class="a" style="left:373px;top:331px;width:721px;height:17px;background:#eeffff"></div>
<div class="n" style="top:281px">1</div><div class="n" style="top:298px">2</div><div class="n" style="top:315px">3</div><div class="n" style="top:332px">4</div><div class="n" style="top:349px">5</div><div class="n" style="top:366px">6</div><div class="n" style="top:383px">7</div><div class="n" style="top:400px">8</div><div class="n" style="top:417px">9</div><div class="n" style="top:434px">10</div><div class="n" style="top:451px">11</div>
<div class="a" style="left:363px;top:284px;width:9px;height:9px;background:#fff;border:1px solid #888"></div><div class="a" style="left:365px;top:288px;width:5px;height:1px;background:#444"></div>
<div class="a" style="left:367px;top:293px;width:1px;height:36px;background:#888"></div><div class="a" style="left:367px;top:328px;width:5px;height:1px;background:#888"></div>
<div class="a" style="left:363px;top:403px;width:9px;height:9px;background:#fff;border:1px solid #888"></div><div class="a" style="left:365px;top:407px;width:5px;height:1px;background:#444"></div>
<div class="a" style="left:367px;top:412px;width:1px;height:54px;background:#888"></div>
<div class="c s" style="left:373px;top:281px"><span class="u">"IEC_Timer_0_DB".TON</span><span style="color:#333">(IN:=</span><span>"A<span class="z">区托盘检测</span>"</span><span class="u" style="color:#333">,</span></div>
<div class="c" style="left:520px;top:298px"><span class="u">PT:=<span style="color:#1060a0">t#1s</span>,</span></div>
<div class="c" style="left:520px;top:315px"><span class="u">Q=&gt;</span> <span class="s u">"A<span class="z">区托盘检测到位</span>"</span> );</div>
<div class="c g" style="left:375px;top:349px">(*<span class="z">系统复位</span>*)</div>
<div class="c g" style="left:375px;top:383px">(*<span class="z">急停</span>*)</div>
<div class="c" style="left:373px;top:400px"><span class="k">IF NOT</span> <span class="s">"<span class="z">急停按钮</span>"</span> <span class="k">THEN</span></div>
<div class="c" style="left:387px;top:417px"><span class="s">"step_num"</span>:=<span style="color:#1060a0">0</span>;</div>
<div class="c g" style="left:375px;top:434px">(*<span class="z">手动</span>*)</div>
<div class="c" style="left:373px;top:451px"><span class="k">ELSIF NOT</span> <span class="s">"<span class="z">自动状态</span>"</span> <span class="k">THEN</span></div>
<div class="a" style="left:1094px;top:280px;width:18px;height:186px;background:#bdbdbd"></div>
<svg class="i sb" style="left:1094px;top:281px" width="17" height="17"><use href="#cu"/></svg>
<div class="a th" style="left:1094px;top:299px;width:17px;height:80px"></div>
<svg class="i" style="left:1094px;top:331px" width="17" height="16"><use href="#gh"/></svg>
<svg class="i sb" style="left:1094px;top:449px" width="17" height="17"><use href="#cd"/></svg>
<div class="a" style="left:320px;top:466px;width:792px;height:18px;background:#e8e8e8"></div>
<div class="a" style="left:836px;top:466px;width:141px;height:18px;background:#fff;border-top:1px solid #888"></div>
<div class="t" style="left:839px;top:468px;font-size:11px">100%</div>
<div class="a sb" style="left:976px;top:467px;width:16px;height:17px"></div>
<svg class="i" style="left:980px;top:472px" width="9" height="6"><path d="M0 0h8L4 5z" fill="#111"/></svg>
<div class="a" style="left:1010px;top:474px;width:66px;height:1px;background:#444"></div>
<div class="a" style="left:1010px;top:480px;width:66px;height:3px;background:repeating-linear-gradient(90deg,#333 0,#333 1px,transparent 1px,transparent 6px)"></div>
<svg class="i" style="left:1029px;top:469px" width="8" height="12"><path d="M.5.500h7v7l-3.500 4-3.500-4z" fill="#ddd" stroke="#777"/></svg>
<svg class="i sb" style="left:1094px;top:467px" width="17" height="17"><use href="#cr"/></svg>
<div class="a" style="left:320px;top:484px;width:792px;height:4px;background:#1e2840"></div>

<!-- inspector -->
<div class="a" style="left:320px;top:488px;width:792px;height:26px;background:#b0b0b0"></div>
<div class="t b w" style="left:325px;top:490px;letter-spacing:.6px">托盘定位 <span style="font-weight:normal;font-size:13px">[FC1]</span></div>
<div class="a" style="left:805px;top:490px;width:75px;height:24px;background:linear-gradient(#f0f0f0,#dcdcdc);border:1px solid #888;border-bottom:0"></div>
<svg class="i" style="left:810px;top:494px" width="16" height="16"><rect x=".5" y=".5" width="15" height="15" fill="#fff" stroke="#6878c8"/><circle cx="7" cy="7" r="3" fill="none" stroke="#111" stroke-width="1.400"/><path d="M9 9l4 4" stroke="#111" stroke-width="1.600"/></svg>
<div class="t b" style="left:829px;top:493px;letter-spacing:.5px">属性</div>
<div class="a" style="left:882px;top:490px;width:78px;height:24px;background:linear-gradient(#e0e0e0,#cfcfcf);border:1px solid #888;border-bottom:0"></div>
<svg class="i" style="left:887px;top:494px" width="16" height="16"><rect x=".5" y=".5" width="15" height="15" fill="#fff" stroke="#6878c8"/><circle cx="8" cy="4" r="1.500" fill="#2040b0"/><path d="M8 7v6" stroke="#2040b0" stroke-width="2"/></svg>
<div class="t b" style="left:904px;top:493px;color:#333;letter-spacing:.5px">信息</div>
<svg class="i" style="left:945px;top:496px" width="13" height="13"><circle cx="6.500" cy="6.500" r="6" fill="#f4d820" stroke="#a09010"/><path d="M6.500 3v1.500M6.500 6v4.500" stroke="#111" stroke-width="2"/></svg>
<div class="a" style="left:964px;top:490px;width:75px;height:24px;background:linear-gradient(#d8d8d8,#c8c8c8);border:1px solid #888;border-bottom:0"></div>
<svg class="i" style="left:969px;top:494px" width="16" height="16"><use href="#steth"/></svg>
<div class="t b" style="left:986px;top:493px;color:#444;letter-spacing:.5px">诊断</div>
<div class="a" style="left:1060px;top:497px;width:9px;height:9px;background:#fff"></div><div class="a" style="left:1063px;top:494px;width:9px;height:3px;border:1px solid #fff;border-bottom:0"></div>
<div class="a" style="left:1077px;top:494px;width:11px;height:11px;background:repeating-linear-gradient(#fff 0,#fff 1px,#ccc 1px,#ccc 3px)"></div>
<svg class="i" style="left:1095px;top:497px" width="13" height="7"><path d="M0 0h13L6.500 7z" fill="#fff"/></svg>
<div class="a" style="left:320px;top:514px;width:792px;height:2px;background:#ececec"></div>
<div class="a" style="left:320px;top:516px;width:774px;height:22px;background:#cbcbcb"></div>
<div class="a" style="left:320px;top:538px;width:792px;height:1px;background:#777"></div>
<div class="a" style="left:326px;top:517px;width:63px;height:22px;background:linear-gradient(#f2f2f2,#e0e0e0);border:1px solid #777;border-bottom:0"></div>
<div class="t b" style="left:338px;top:518px">常规</div>
<div class="a" style="left:320px;top:539px;width:198px;height:161px;background:repeating-linear-gradient(#f0f0f0 0,#f0f0f0 18px,#e6e6e6 18px,#e6e6e6 19px)"></div>
<div class="a" style="left:337px;top:542px;width:27px;height:18px;background:#bccad6"></div>
<div class="t" style="left:338px;top:544px">常规</div><div class="t" style="left:338px;top:563px">信息</div><div class="t" style="left:338px;top:582px">时间戳</div><div class="t" style="left:338px;top:601px">编译</div><div class="t" style="left:338px;top:620px">保护</div><div class="t" style="left:338px;top:639px">属性</div>
<div class="a" style="left:518px;top:541px;width:7px;height:159px;background:#dedede;border:1px solid #aaa"></div>
<div class="a" style="left:519px;top:591px;width:5px;height:23px;background:linear-gradient(#aaa,#f0f0f0)"></div>
<svg class="i" style="left:519px;top:600px" width="5" height="6"><path d="M4 0L0 3l4 3z" fill="#111"/></svg>
<div class="a" style="left:519px;top:625px;width:5px;height:23px;background:linear-gradient(#aaa,#f0f0f0)"></div>
<svg class="i" style="left:519px;top:633px" width="5" height="6"><path d="M0 0l4 3-4 3z" fill="#111"/></svg>
<div class="a" style="left:525px;top:539px;width:569px;height:161px;background:#e9e9e9"></div>
<div class="t b" style="left:541px;top:552px;letter-spacing:.5px">常规</div>
<div class="a" style="left:582px;top:567px;width:462px;height:1px;background:#111"></div>
<div class="a" style="left:538px;top:577px;width:506px;height:123px;background:#c9c9c9"></div>
<div class="t" style="left:696px;top:603px;letter-spacing:.2px">名称 <b style="color:#775">:</b></div>
<div class="a" style="left:742px;top:601px;width:288px;height:18px;background:#fff;border:1px solid #888"></div>
<div class="t" style="left:746px;top:603px">托盘定位</div>
<div class="t" style="left:696px;top:627px;letter-spacing:.2px">类型 <b style="color:#775">:</b></div>
<div class="a" style="left:742px;top:625px;width:288px;height:18px;background:#e0e0e0;border:1px solid #888"></div>
<div class="t" style="left:746px;top:627px;font-size:11px;color:#223">FC</div>
<div class="t" style="left:696px;top:651px;letter-spacing:.2px">编号 <b style="color:#775">:</b></div>
<div class="a" style="left:742px;top:649px;width:180px;height:18px;background:#fff;border:1px solid #888"></div>
<div class="t" style="left:746px;top:651px;font-size:11px">1</div>
<div class="t" style="left:696px;top:675px;letter-spacing:.2px">语言 <b style="color:#775">:</b></div>
<div class="a" style="left:742px;top:673px;width:180px;height:18px;background:#e0e0e0;border:1px solid #888"></div>
<div class="t" style="left:747px;top:675px;font-size:11px">SCL</div>
<div class="a sb" style="left:906px;top:674px;width:15px;height:16px;background:#d0d0d0"></div>
<svg class="i" style="left:909px;top:680px" width="9" height="6"><path d="M0 0h8L4 5z" fill="#888"/></svg>
<div class="a" style="left:1094px;top:539px;width:18px;height:161px;background:#c9c9c9"></div>
<svg class="i sb" style="left:1094px;top:541px" width="17" height="17"><use href="#cu"/></svg>
<svg class="i sb" style="left:1094px;top:560px" width="17" height="17"><use href="#gh"/></svg>
<svg class="i sb" style="left:1094px;top:681px" width="17" height="17"><use href="#cd"/></svg>

<!-- right panel -->
<div class="a" style="left:1115px;top:74px;width:226px;height:24px;background:#b0b0b0"></div>
<div class="t b w" style="left:1121px;top:76px;letter-spacing:1.500px">指令</div>
<div class="a" style="left:1288px;top:83px;width:9px;height:9px;background:#fff"></div><div class="a" style="left:1291px;top:80px;width:9px;height:3px;border:1px solid #fff;border-bottom:0"></div>
<svg class="i" style="left:1306px;top:81px" width="12" height="11"><rect x=".5" y=".5" width="11" height="10" fill="#ccc" stroke="#ddd"/><path d="M3.500 1v9M6.500 1v9M9.500 1v9" stroke="#eee"/></svg>
<svg class="i" style="left:1327px;top:80px" width="8" height="13"><path d="M0 0l7 6.500L0 13z" fill="#fff"/></svg>
<div class="a" style="left:1115px;top:98px;width:226px;height:7px;background:#ececec"></div>
<div class="a" style="left:1115px;top:105px;width:226px;height:21px;background:linear-gradient(#fff,#f2f2f2 45%,#d8d8d8 55%,#dcdcdc);border-bottom:1px solid #777"></div>
<div class="t b" style="left:1121px;top:105px;letter-spacing:1.500px">选件</div>
<div class="a" style="left:1115px;top:126px;width:226px;height:25px;background:#e8e8e8"></div>
<svg class="i" style="left:1295px;top:130px" width="15" height="15"><use href="#t1"/></svg>
<svg class="i" style="left:1318px;top:130px" width="15" height="15"><use href="#t2"/></svg>
<div class="a" style="left:1115px;top:151px;width:226px;height:3px;background:#9c9c9c"></div>
<div class="a band" style="left:1115px;top:154px;width:226px;height:21px"></div>
<svg class="i" style="left:1119px;top:158px" width="10" height="12"><path d="M2 2l5 4-5 4" fill="none" stroke="#111" stroke-width="2"/></svg>
<div class="a" style="left:1136px;top:154px;width:1px;height:20px;background:#888"></div>
<div class="t b" style="left:1141px;top:155px;letter-spacing:.4px">收藏夹</div>
<div class="a" style="left:1115px;top:175px;width:226px;height:3px;background:#9c9c9c"></div>
<div class="a band" style="left:1115px;top:178px;width:226px;height:21px"></div>
<svg class="i" style="left:1119px;top:183px" width="12" height="12"><path d="M2 3l4 4 4-4" fill="none" stroke="#111" stroke-width="2"/></svg>
<div class="a" style="left:1136px;top:178px;width:1px;height:20px;background:#888"></div>
<div class="t b" style="left:1140px;top:179px;letter-spacing:1.500px">基本指令</div>
<!-- basic table -->
<div class="a hd" style="left:1115px;top:199px;width:181px;height:18px"></div>
<div class="a hg" style="left:1297px;top:199px;width:44px;height:18px"></div>
<div class="a" style="left:1296px;top:199px;width:1px;height:18px;background:#aab"></div>
<div class="t" style="left:1119px;top:201px">名称</div><div class="t" style="left:1301px;top:201px;width:22px;overflow:hidden">描述</div>
<div class="a" style="left:1115px;top:217px;width:208px;height:2px;background:#fff"></div>
<div class="a" style="left:1115px;top:219px;width:208px;height:113px;background:repeating-linear-gradient(#efefef 0,#efefef 18px,#fff 18px,#fff 19px)"></div>
<div class="a" style="left:1115px;top:219px;width:208px;height:1px;background:#c0ccd8"></div><div class="a" style="left:1115px;top:237px;width:208px;height:1px;background:#c0ccd8"></div>
<div class="a" style="left:1297px;top:220px;width:26px;height:17px;background:#d8dee3"></div>
<div class="a" style="left:1296px;top:219px;width:1px;height:113px;background:#fff"></div>
<svg class="i" style="left:1122px;top:223px" width="7" height="10"><use href="#tr"/></svg>
<svg class="i" style="left:1134px;top:220px" width="16" height="16"><use href="#fold"/></svg><svg class="i" style="left:1137px;top:226px" width="10" height="7"><path d="M1 3.500h4M5 1v5M7 1v5" stroke="#224" fill="none"/></svg>
<div class="t" style="left:1154px;top:221px">位逻辑运算</div>
<svg class="i" style="left:1122px;top:242px" width="7" height="10"><use href="#tr"/></svg>
<svg class="i" style="left:1134px;top:239px" width="16" height="16"><use href="#fold"/></svg><svg class="i" style="left:1138px;top:244px" width="9" height="9"><circle cx="4.500" cy="4.500" r="3.500" fill="none" stroke="#112" stroke-width="1.200"/><path d="M4.500 2.500v2h2" stroke="#112" fill="none"/></svg>
<div class="t" style="left:1154px;top:240px">定时器操作</div>
<svg class="i" style="left:1122px;top:261px" width="7" height="10"><use href="#tr"/></svg>
<svg class="i" style="left:1134px;top:258px" width="16" height="16"><use href="#fold"/></svg><div class="t" style="left:1137px;top:261px;font-size:10px;line-height:12px;font-weight:bold;color:#112">+1</div>
<div class="t" style="left:1154px;top:259px">计数器操作</div>
<svg class="i" style="left:1122px;top:280px" width="7" height="10"><use href="#tr"/></svg>
<svg class="i" style="left:1134px;top:277px" width="16" height="16"><use href="#fold"/></svg><div class="t" style="left:1139px;top:280px;font-size:10px;line-height:12px;font-weight:bold;color:#112">±</div>
<div class="t" style="left:1154px;top:278px">数学函数</div>
<svg class="i" style="left:1122px;top:299px" width="7" height="10"><use href="#tr"/></svg>
<svg class="i" style="left:1134px;top:296px" width="16" height="16"><use href="#fold"/></svg><svg class="i" style="left:1136px;top:301px" width="12" height="8"><path d="M1 3c2-2 3 2 5 0M7 5h4M9 3l2 2-2 2" stroke="#112" fill="none"/></svg>
<div class="t" style="left:1154px;top:297px">移动操作</div>
<svg class="i" style="left:1122px;top:318px" width="7" height="10"><use href="#tr"/></svg>
<svg class="i" style="left:1134px;top:315px" width="16" height="16"><use href="#fold"/></svg><svg class="i" style="left:1136px;top:318px" width="12" height="9"><path d="M0 5l3-4 3 4zM6 4l3 4 3-4z" fill="none" stroke="#112"/></svg>
<div class="t" style="left:1154px;top:316px">转换操作</div>
<div class="a" style="left:1323px;top:217px;width:18px;height:115px;background:#c4c4c4"></div>
<svg class="i sb" style="left:1323px;top:220px" width="17" height="17"><use href="#cu"/></svg>
<svg class="i sb" style="left:1323px;top:238px" width="17" height="17"><use href="#gh"/></svg>
<svg class="i sb" style="left:1323px;top:313px" width="17" height="17"><use href="#cd"/></svg>
<div class="a" style="left:1115px;top:332px;width:226px;height:17px;background:#bdbdbd"></div>
<div class="a" style="left:1323px;top:332px;width:18px;height:17px;background:#e8e8e8"></div>
<svg class="i sb" style="left:1116px;top:332px" width="17" height="16"><use href="#cl"/></svg>
<div class="a th" style="left:1134px;top:332px;width:141px;height:16px"></div>
<svg class="i" style="left:1196px;top:332px" width="16" height="16"><use href="#gv"/></svg>
<svg class="i sb" style="left:1306px;top:332px" width="17" height="16"><use href="#cr"/></svg>
<div class="a" style="left:1115px;top:349px;width:226px;height:3px;background:#9c9c9c"></div>
<div class="a band" style="left:1115px;top:352px;width:226px;height:21px"></div>
<svg class="i" style="left:1119px;top:357px" width="12" height="12"><path d="M2 3l4 4 4-4" fill="none" stroke="#111" stroke-width="2"/></svg>
<div class="a" style="left:1136px;top:352px;width:1px;height:20px;background:#888"></div>
<div class="t b" style="left:1140px;top:353px;letter-spacing:1.500px">扩展指令</div>
<!-- ext table -->
<div class="a hd" style="left:1115px;top:373px;width:181px;height:18px"></div>
<div class="a hg" style="left:1297px;top:373px;width:44px;height:18px"></div>
<div class="a" style="left:1296px;top:373px;width:1px;height:18px;background:#aab"></div>
<div class="t" style="left:1119px;top:375px">名称</div><div class="t" style="left:1301px;top:375px;width:22px;overflow:hidden">描述</div>
<div class="a" style="left:1115px;top:391px;width:208px;height:2px;background:#fff"></div>
<div class="a" style="left:1115px;top:393px;width:208px;height:113px;background:repeating-linear-gradient(#efefef 0,#efefef 18px,#fff 18px,#fff 19px)"></div>
<div class="a" style="left:1115px;top:393px;width:208px;height:1px;background:#c0ccd8"></div><div class="a" style="left:1115px;top:411px;width:208px;height:1px;background:#c0ccd8"></div>
<div class="a" style="left:1297px;top:394px;width:26px;height:17px;background:#d8dee3"></div>
<div class="a" style="left:1296px;top:393px;width:1px;height:113px;background:#fff"></div>
<svg class="i" style="left:1122px;top:397px" width="7" height="10"><use href="#tr"/></svg><svg class="i" style="left:1134px;top:394px" width="16" height="16"><use href="#fold"/></svg><div class="t" style="left:1154px;top:395px">日期和时间</div>
<svg class="i" style="left:1122px;top:416px" width="7" height="10"><use href="#tr"/></svg><svg class="i" style="left:1134px;top:413px" width="16" height="16"><use href="#fold"/></svg><div class="t" style="left:1154px;top:414px">字符串 + 字符</div>
<svg class="i" style="left:1122px;top:435px" width="7" height="10"><use href="#tr"/></svg><svg class="i" style="left:1134px;top:432px" width="16" height="16"><use href="#fold"/></svg><div class="t" style="left:1154px;top:433px">过程映像</div>
<svg class="i" style="left:1122px;top:454px" width="7" height="10"><use href="#tr"/></svg><svg class="i" style="left:1134px;top:451px" width="16" height="16"><use href="#fold"/></svg><div class="t" style="left:1154px;top:452px">分布式 I/O</div>
<svg class="i" style="left:1122px;top:473px" width="7" height="10"><use href="#tr"/></svg><svg class="i" style="left:1134px;top:470px" width="16" height="16"><use href="#fold"/></svg><div class="t" style="left:1154px;top:471px;font-size:11.500px">PROFIenergy</div>
<svg class="i" style="left:1122px;top:492px" width="7" height="10"><use href="#tr"/></svg><svg class="i" style="left:1134px;top:489px" width="16" height="16"><use href="#fold"/></svg><div class="t" style="left:1154px;top:490px">模块参数化分配</div>
<div class="a" style="left:1323px;top:391px;width:18px;height:115px;background:#c4c4c4"></div>
<svg class="i sb" style="left:1323px;top:394px" width="17" height="17"><use href="#cu"/></svg>
<svg class="i sb" style="left:1323px;top:412px" width="17" height="17"><use href="#gh"/></svg>
<svg class="i sb" style="left:1323px;top:488px" width="17" height="17"><use href="#cd"/></svg>
<div class="a" style="left:1115px;top:506px;width:226px;height:17px;background:#bdbdbd"></div>
<div class="a" style="left:1323px;top:506px;width:18px;height:17px;background:#e8e8e8"></div>
<svg class="i sb" style="left:1116px;top:506px" width="17" height="16"><use href="#cl"/></svg>
<div class="a th" style="left:1134px;top:506px;width:141px;height:16px"></div>
<svg class="i" style="left:1196px;top:506px" width="16" height="16"><use href="#gv"/></svg>
<svg class="i sb" style="left:1306px;top:506px" width="17" height="16"><use href="#cr"/></svg>
<div class="a" style="left:1115px;top:523px;width:226px;height:3px;background:#9c9c9c"></div>
<div class="a band" style="left:1115px;top:526px;width:226px;height:21px"></div>
<svg class="i" style="left:1119px;top:531px" width="12" height="12"><path d="M2 3l4 4 4-4" fill="none" stroke="#111" stroke-width="2"/></svg>
<div class="a" style="left:1136px;top:526px;width:1px;height:20px;background:#888"></div>
<div class="t b" style="left:1140px;top:527px;letter-spacing:1.500px">工艺</div>
<!-- tech table -->
<div class="a hd" style="left:1115px;top:547px;width:181px;height:18px"></div>
<div class="a hg" style="left:1297px;top:547px;width:44px;height:18px"></div>
<div class="a" style="left:1296px;top:547px;width:1px;height:18px;background:#aab"></div>
<div class="t" style="left:1119px;top:549px">名称</div><div class="t" style="left:1301px;top:549px">描述</div>
<div class="a" style="left:1115px;top:565px;width:226px;height:2px;background:#fff"></div>
<div class="a" style="left:1115px;top:567px;width:226px;height:92px;background:repeating-linear-gradient(#efefef 0,#efefef 18px,#fff 18px,#fff 19px)"></div>
<div class="a" style="left:1115px;top:567px;width:226px;height:1px;background:#c0ccd8"></div><div class="a" style="left:1115px;top:585px;width:226px;height:1px;background:#c0ccd8"></div>
<div class="a" style="left:1297px;top:568px;width:44px;height:17px;background:#d8dee3"></div>
<div class="a" style="left:1296px;top:567px;width:1px;height:92px;background:#fff"></div>
<svg class="i" style="left:1122px;top:571px" width="7" height="10"><use href="#tr"/></svg><svg class="i" style="left:1134px;top:568px" width="16" height="16"><use href="#fold"/></svg><div class="t" style="left:1154px;top:569px">计数和测量</div>
<svg class="i" style="left:1122px;top:590px" width="7" height="10"><use href="#tr"/></svg><svg class="i" style="left:1134px;top:587px" width="16" height="16"><use href="#fold"/></svg><div class="t" style="left:1154px;top:588px">PID 控制</div>
<svg class="i" style="left:1122px;top:609px" width="7" height="10"><use href="#tr"/></svg><svg class="i" style="left:1134px;top:606px" width="16" height="16"><use href="#fold"/></svg><div class="t" style="left:1154px;top:607px">运动控制</div>
<div class="a" style="left:1115px;top:658px;width:226px;height:20px;background:#bdbdbd"></div>
<svg class="i sb" style="left:1116px;top:658px" width="17" height="16"><use href="#cl"/></svg>
<div class="a th" style="left:1134px;top:658px;width:161px;height:16px"></div>
<svg class="i" style="left:1206px;top:658px" width="16" height="16"><use href="#gv"/></svg>
<svg class="i sb" style="left:1324px;top:658px" width="17" height="16"><use href="#cr"/></svg>
<div class="a" style="left:1115px;top:675px;width:226px;height:3px;background:#9c9c9c"></div>
<div class="a band" style="left:1115px;top:678px;width:226px;height:22px;border-bottom:0"></div>
<svg class="i" style="left:1119px;top:682px" width="10" height="12"><path d="M2 2l5 4-5 4" fill="none" stroke="#111" stroke-width="2"/></svg>
<div class="a" style="left:1136px;top:678px;width:1px;height:21px;background:#888"></div>
<div class="t b" style="left:1140px;top:679px;letter-spacing:1.500px">通信</div>

<!-- right strip -->
<div class="a" style="left:1342px;top:74px;width:24px;height:626px;background:#aeaeae"></div>
<div class="a" style="left:1342px;top:105px;width:17px;height:72px;background:#efefef;border:1px solid #fff"></div>
<div class="a" style="left:1342px;top:181px;width:17px;height:72px;background:#cdcdcd;border:1px solid #e8e8e8"></div>
<div class="a" style="left:1342px;top:257px;width:17px;height:72px;background:#cdcdcd;border:1px solid #e8e8e8"></div>
<div class="a" style="left:1342px;top:333px;width:17px;height:56px;background:#cdcdcd;border:1px solid #e8e8e8"></div>
<svg class="i" style="left:1344px;top:107px" width="15" height="15"><rect x=".5" y=".5" width="6" height="6" fill="#fff" stroke="#223"/><rect x="8.500" y=".5" width="6" height="6" fill="#fff" stroke="#223"/><rect x=".5" y="8.500" width="6" height="6" fill="#fff" stroke="#223"/><rect x="8.500" y="8.500" width="6" height="6" fill="#fff" stroke="#223"/></svg>
<div class="t" style="left:1342px;top:125px;width:17px;font-weight:bold;font-size:14px;line-height:17px;writing-mode:vertical-rl;text-orientation:sideways;letter-spacing:1px">指令</div>
<svg class="i" style="left:1344px;top:183px" width="14" height="15"><use href="#steth"/></svg>
<div class="t" style="left:1342px;top:200px;width:17px;font-weight:bold;font-size:14px;line-height:17px;color:#666;writing-mode:vertical-rl;text-orientation:sideways;letter-spacing:1px">测试</div>
<svg class="i" style="left:1344px;top:258px" width="16" height="17"><rect x="1" y="1" width="11" height="14" fill="#fff" stroke="#b89020"/><path d="M3 4h7M3 7h7M3 10h7" stroke="#334"/><path d="M6 11l3 4 6-8" fill="none" stroke="#20a040" stroke-width="2.500"/></svg>
<div class="t" style="left:1342px;top:278px;width:17px;font-weight:bold;font-size:14px;line-height:17px;color:#666;writing-mode:vertical-rl;text-orientation:sideways;letter-spacing:1px">任务</div>
<svg class="i" style="left:1344px;top:335px" width="16" height="14"><path d="M1 1h6l1 1 1-1h6v11H9l-1 1-1-1H1z" fill="#fff" stroke="#1830a0" stroke-width="1.300"/><path d="M8 2v10" stroke="#1830a0"/></svg>
<div class="t" style="left:1342px;top:352px;width:17px;font-weight:bold;font-size:14px;line-height:17px;color:#666;writing-mode:vertical-rl;text-orientation:sideways">库</div>
<div class="a" style="left:1347px;top:583px;width:46px;height:46px;border-radius:50%;background:radial-gradient(circle at 50% 30%,#66dd78,#38b850);border:2px solid #dde"></div>
<div class="t w" style="left:1352px;top:598px;font-weight:bold;font-size:12px">69</div>

<!-- portal bar -->
<div class="a" style="left:0;top:699px;width:1366px;height:29px;background:#1b1b1b"></div>
<svg class="i" style="left:36px;top:708px" width="7" height="12"><path d="M6 0L0 6l6 6z" fill="#fff"/></svg>
<div class="t w" style="left:53px;top:705px;font-size:13px;line-height:17px;font-weight:bold;letter-spacing:.6px">Portal <span style="letter-spacing:1px">视图</span></div>
<div class="a" style="left:181px;top:703px;width:113px;height:20px;background:#b2b2b2"></div>
<svg class="i" style="left:184px;top:705px" width="15" height="15"><use href="#grid"/></svg>
<div class="t" style="left:204px;top:705px;color:#111;font-size:12.500px">总览</div>
<div class="a" style="left:297px;top:703px;width:113px;height:20px;background:#fff"></div>
<svg class="i" style="left:301px;top:708px" width="16" height="11"><use href="#gb"/></svg>
<div class="t" style="left:321px;top:705px;font-weight:bold;letter-spacing:.5px">托盘定位 (F...</div>
<div class="a" style="left:1058px;top:706px;width:15px;height:15px;border-radius:50%;background:#0808e0"></div>
<svg class="i" style="left:1058px;top:706px" width="15" height="15"><path d="M3.500 8l3 3 5-6" fill="none" stroke="#fff" stroke-width="2"/></svg>
<div class="t w" style="left:1078px;top:705px;font-size:12px;letter-spacing:1px">项目 车模装配生产</div>
<!-- IME -->
<div class="a" style="left:1182px;top:699px;width:166px;height:25px;background:#f4f5f8;box-shadow:0 0 2px #888"></div>
<div class="a" style="left:1186px;top:701px;width:19px;height:21px;border-radius:50%;background:radial-gradient(circle at 40% 30%,#4a90d0,#0c2848)"></div>
<div class="t w" style="left:1189px;top:705px;font-size:11px;font-weight:bold">标</div>
<div class="a" style="left:1202px;top:705px;width:11px;height:13px;border-radius:50%;background:#a01818"></div>
<div class="a" style="left:1202px;top:715px;width:6px;height:6px;border-radius:50%;background:#f0c020"></div>
<div class="t" style="left:1219px;top:703px;font-size:16px;line-height:18px;font-weight:bold;color:#1878d8">中</div>
<svg class="i" style="left:1240px;top:704px" width="15" height="16"><path d="M8 1a7 7 0 11-6 11c5 1 9-4 6-11z" fill="#2080e0"/></svg>
<svg class="i" style="left:1262px;top:705px" width="10" height="16"><circle cx="3" cy="4" r="2" fill="none" stroke="#2080e0"/><path d="M7 8c1 4 0 6-2 7" stroke="#2080e0" stroke-width="2" fill="none"/></svg>
<svg class="i" style="left:1278px;top:707px" width="19" height="11"><rect width="19" height="11" fill="#2080e0"/><path d="M2 3h15M2 5.500h15M4 8.500h11" stroke="#fff" stroke-dasharray="2 1"/></svg>
<svg class="i" style="left:1300px;top:703px" width="13" height="18"><rect x="3" y="0" width="7" height="12" rx="3" fill="#2080e0"/><path d="M1 8c0 6 11 6 11 0M6.500 13v3M3 17h7" stroke="#2080e0" stroke-width="1.500" fill="none"/></svg>
<svg class="i" style="left:1319px;top:703px" width="18" height="18"><circle cx="9" cy="9" r="5" fill="none" stroke="#1868d0" stroke-width="4"/><circle cx="9" cy="9" r="8" fill="none" stroke="#1868d0" stroke-width="2.500" stroke-dasharray="3 3"/></svg>
<svg class="i" style="left:1338px;top:703px" width="8" height="18"><path d="M7 1L1 9l6 8" fill="#dde" stroke="#bbb"/></svg>

<!-- windows taskbar -->
<div class="a" style="left:0;top:728px;width:1366px;height:40px;background:linear-gradient(90deg,#8e5d5c 0,#96696a 300px,#a57070 540px,#a23a36 640px,#9f3733 800px,#a0302c 1000px,#8c2828 1366px)"></div>
<svg class="i" style="left:0;top:728px" width="1366" height="40"><path d="M650 40L660 0h140l-60 40z" fill="#a9453f"/><path d="M800 40L860 0h90l30 40z" fill="#8e2a26"/><path d="M650 10l-40 30h-60l60-30z" fill="#b0807e" opacity=".6"/><path d="M1000 40l40-30 120-10 20 40z" fill="#95302c"/></svg>
<div class="a" style="left:0;top:728px;width:1366px;height:3px;background:#7a4040;opacity:.7"></div>
<div class="a" style="left:600px;top:734px;width:766px;height:2px;background:#fff;opacity:.12"></div>
<svg class="i" style="left:12px;top:735px" width="27" height="26"><path d="M0 4l12-2v11H0zM13 2L27 0v13H13zM0 14h12v11L0 23zM13 14h14v12l-14-2z" fill="#fff"/></svg>
<svg class="i" style="left:65px;top:733px" width="32" height="32"><circle cx="10" cy="9" r="8" fill="#98c030"/><circle cx="22" cy="9" r="8" fill="#2d88d8"/><circle cx="10" cy="23" r="8" fill="#e8b020"/><circle cx="22" cy="23" r="8" fill="#d83828"/><circle cx="16" cy="16" r="3" fill="#a06868"/></svg>
<div class="a" style="left:116px;top:729px;width:58px;height:39px;background:rgba(255,255,255,.12);border:1px solid rgba(255,255,255,.3)"></div>
<svg class="i" style="left:129px;top:734px" width="32" height="30"><path d="M1 5h12l3 3h15v20H1z" fill="#fce8a8" stroke="#d8b048"/><path d="M3 10h26v16H3z" fill="#fff4cc"/><path d="M8 17h16v11h-3v-7h-10v7H8z" fill="#5cb8e8"/><path d="M4 3h4v3H4zM12 3h4v3h-4z" fill="#5aa838"/></svg>
<svg class="i" style="left:191px;top:734px" width="32" height="28"><path d="M16 0L0 15h6v13h7v-9h6v9h7V15h6z" fill="#fff"/></svg>
<svg class="i" style="left:256px;top:744px" width="30" height="12"><path d="M15 0l15 5-15 5L0 5z" fill="#e02828"/><path d="M0 5l15 5 15-5v2L15 12 0 7z" fill="#333"/></svg>
<div class="a" style="left:302px;top:729px;width:58px;height:39px;background:rgba(255,255,255,.12);border:1px solid rgba(255,255,255,.3)"></div>
<svg class="i" style="left:316px;top:733px" width="30" height="30"><circle cx="15" cy="15" r="15" fill="#fff"/><circle cx="15" cy="15" r="12.500" fill="#3d8ee0"/><path d="M21 8c-6-3-11 0-10 4 1 3 9 3 9 7 0 3-6 4-10 2" fill="none" stroke="#fff" stroke-width="3"/></svg>
<div class="a" style="left:364px;top:729px;width:58px;height:39px;background:rgba(255,255,255,.12);border:1px solid rgba(255,255,255,.3)"></div>
<div class="a" style="left:378px;top:732px;width:29px;height:30px;background:#1c5cc8"></div>
<div class="t w" style="left:378px;top:734px;width:29px;text-align:center;font-size:24px;line-height:26px;font-weight:bold">W</div>
<div class="a" style="left:426px;top:729px;width:58px;height:39px;background:rgba(255,255,255,.12);border:1px solid rgba(255,255,255,.3)"></div>
<div class="a" style="left:439px;top:732px;width:32px;height:32px;background:#087a80"></div>
<svg class="i" style="left:439px;top:732px" width="32" height="32"><path d="M0 4h20M10 4v10h14M4 14h6M0 20h28M14 20v8h14" stroke="#e01818" stroke-width="2.500" fill="none"/><path d="M4 6h8v6H4zM16 16h8v5h-8z" fill="#555"/><path d="M0 27h8l4 5H0z" fill="#f0e020"/><path d="M14 26h18" stroke="#f0e020" stroke-width="2"/></svg>
<div class="a" style="left:488px;top:729px;width:58px;height:39px;background:rgba(255,255,255,.12);border:1px solid rgba(255,255,255,.3)"></div>
<div class="t" style="left:505px;top:730px;font-size:34px;line-height:36px;font-weight:bold;color:#3058d0">?</div>
<div class="a" style="left:550px;top:729px;width:58px;height:39px;background:rgba(255,255,255,.2);border:1px solid #f0e0e0"></div>
<div class="a" style="left:563px;top:732px;width:32px;height:32px;background:#2c3448"></div>
<div class="t w" style="left:563px;top:733px;width:32px;text-align:center;font-size:15px;line-height:15px;font-weight:bold">TIA<br><span style="color:#9fb4e0">V12</span></div>
<!-- tray -->
<svg class="i" style="left:1072px;top:747px" width="8" height="5"><path d="M0 5l4-5 4 5z" fill="#fff"/></svg>
<svg class="i" style="left:1093px;top:741px" width="15" height="15"><path d="M0 1h7v6H0zM8 1h7v6H8zM0 8h7v6H0zM8 8h7v6H8z" fill="#fff"/></svg>
<svg class="i" style="left:1117px;top:741px" width="15" height="16"><path d="M7.500 0l7 2c0 8-2 11-7 14-5-3-7-6-7-14z" fill="#e8f4e8"/><path d="M7.500 2l5 2c0 6-2 8-5 10-3-2-5-4-5-10z" fill="#48b050"/><path d="M8 4L5 9h3l-1 4 4-6H8z" fill="#fff"/></svg>
<svg class="i" style="left:1141px;top:741px" width="16" height="16"><circle cx="8" cy="8" r="8" fill="#e8c010"/><circle cx="8" cy="8" r="5" fill="#2a9a28"/><path d="M8 5v6M5 8h6" stroke="#ffe" stroke-width="2"/></svg>
<svg class="i" style="left:1165px;top:740px" width="15" height="17"><path d="M1 0v17" stroke="#fff" stroke-width="1.500"/><path d="M2 1h5l1 2h6l-2 3 2 3H7L6 7H2z" fill="#fff"/></svg>
<svg class="i" style="left:1189px;top:740px" width="16" height="17"><path d="M2 0v5M5 0v5M1 5h5v3H4v9H3V8H1z" fill="#fff"/><rect x="8.500" y="2" width="7" height="14" fill="none" stroke="#fff" stroke-width="1.300"/><rect x="10" y="7" width="4" height="8" fill="#fff"/></svg>
<svg class="i" style="left:1213px;top:741px" width="16" height="15"><path d="M0 12h2v2H0zM4 10h2v4H4zM8 7h2v7H8zM12 4h2v10h-2z" fill="#fff"/></svg>
<svg class="i" style="left:1238px;top:740px" width="16" height="17"><path d="M0 5h3l4-4v13l-4-4H0z" fill="#fff"/><circle cx="11" cy="13" r="4" fill="#e8e8e8" stroke="#d01010" stroke-width="1.500"/><path d="M8.500 10.500l5 5" stroke="#d01010" stroke-width="1.500"/></svg>
<svg class="i" style="left:1264px;top:741px" width="16" height="16"><circle cx="8" cy="8" r="7.500" fill="#7c2c2c" stroke="#c0a0a0"/><path d="M5 5l6 6M11 5l-6 6" stroke="#d8c8c8" stroke-width="2"/></svg>
<div class="t w" style="left:1305px;top:733px;font-size:12px;letter-spacing:.3px">23:34</div>
<div class="t w" style="left:1291px;top:751px;font-size:12px;letter-spacing:.6px">2015/6/20</div>
</body></html>
